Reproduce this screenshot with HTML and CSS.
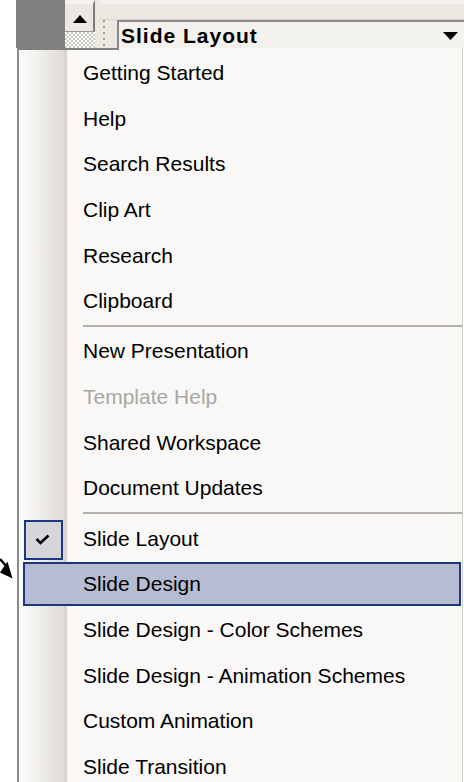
FILE: index.html
```html
<!DOCTYPE html>
<html lang="en">
<head>
<meta charset="utf-8">
<title>Task Pane Menu</title>
<link rel="stylesheet" href="styles.css">
</head>
<body>
<div class="screen">
  <header class="taskbar">
    <div class="gap"></div>
    <div class="dark"></div>
    <div class="scroll">
      <div class="scroll-up">
        <svg width="14" height="8" viewBox="0 0 14 8"><polygon points="7,0 14,8 0,8" fill="#000"/></svg>
      </div>
      <div class="dither"></div>
    </div>
    <div class="pane-bar">
      <div class="pane-top"></div>
      <div class="pane-row">
        <div class="grip-area"><span class="grip"></span></div>
        <div class="pane-title">
          <span class="title-text">Slide Layout</span>
          <svg class="drop" width="15" height="8" viewBox="0 0 15 8"><polygon points="0,0 15,0 7.5,8" fill="#000"/></svg>
        </div>
      </div>
    </div>
  </header>

  <div class="menu">
    <div class="menu-edge"><span class="edge-line"></span></div>
    <ul class="items">
      <li class="item"><span class="mark"></span><span class="label">Getting Started</span></li>
      <li class="item"><span class="mark"></span><span class="label">Help</span></li>
      <li class="item"><span class="mark"></span><span class="label">Search Results</span></li>
      <li class="item"><span class="mark"></span><span class="label">Clip Art</span></li>
      <li class="item"><span class="mark"></span><span class="label">Research</span></li>
      <li class="item"><span class="mark"></span><span class="label">Clipboard</span></li>
      <li class="sep"></li>
      <li class="item"><span class="mark"></span><span class="label">New Presentation</span></li>
      <li class="item disabled"><span class="mark"></span><span class="label">Template Help</span></li>
      <li class="item"><span class="mark"></span><span class="label">Shared Workspace</span></li>
      <li class="item"><span class="mark"></span><span class="label">Document Updates</span></li>
      <li class="sep"></li>
      <li class="item"><span class="mark checked"><svg width="15" height="11" viewBox="0 0 15 11"><path d="M1.5 5 L5.5 9 L13.5 1.5" fill="none" stroke="#000" stroke-width="2.6"/></svg></span><span class="label">Slide Layout</span></li>
      <li class="item hot"><span class="mark"></span><span class="label">Slide Design</span></li>
      <li class="item"><span class="mark"></span><span class="label">Slide Design - Color Schemes</span></li>
      <li class="item"><span class="mark"></span><span class="label">Slide Design - Animation Schemes</span></li>
      <li class="item"><span class="mark"></span><span class="label">Custom Animation</span></li>
      <li class="item"><span class="mark"></span><span class="label">Slide Transition</span></li>
    </ul>
  </div>

  <svg class="pointer" width="14" height="22" viewBox="0 0 14 22">
    <line x1="0" y1="1" x2="7" y2="9" stroke="#000" stroke-width="2.4"/>
    <polygon points="12.5,20.5 0,14.5 7.5,3.5" fill="#000"/>
  </svg>
</div>
</body>
</html>
```

FILE: styles.css
```css
html, body {
  margin: 0;
  padding: 0;
  background: #fff;
}

.screen {
  position: relative;
  width: 464px;
  height: 782px;
  overflow: hidden;
  font-family: "Liberation Sans", Arial, sans-serif;
  color: #000;
}

/* ---- task pane title strip ---- */
.taskbar {
  display: flex;
  height: 48px;
}

.gap {
  width: 16px;
  flex: none;
}

.dark {
  width: 49px;
  flex: none;
  background: #808080;
}

.scroll {
  width: 30px;
  flex: none;
  display: flex;
  flex-direction: column;
}

.scroll-up {
  height: 32px;
  box-sizing: border-box;
  display: flex;
  align-items: flex-start;
  justify-content: center;
  padding-top: 11px;
  padding-left: 1px;
  background: #ebe8e2;
  border-top: 4px solid #f4f2ee;
  border-right: 2px solid #7c7c7c;
  border-bottom: 1px solid #9a9a9a;
}

.dither {
  flex: 1;
  background: repeating-conic-gradient(#c8c6c0 0 25%, #fbfbfa 0 50%) 0 0 / 4px 4px;
}

.pane-bar {
  flex: 1;
  display: flex;
  flex-direction: column;
  background: #ebe8e1;
}

.pane-top {
  height: 20px;
  box-sizing: border-box;
  border-top: 4px solid #f3f1ed;
  border-bottom: 1px solid #d9d5cd;
  margin-left: 5px;
}

.pane-row {
  flex: 1;
  display: flex;
}

.grip-area {
  width: 22px;
  flex: none;
  display: flex;
  justify-content: center;
}

.grip {
  width: 2px;
  height: 26px;
  margin-left: -4px;
  background: repeating-linear-gradient(to bottom, #9c9a94 0 2px, transparent 2px 6px);
}

.pane-title {
  flex: 1;
  display: flex;
  align-items: center;
  justify-content: space-between;
  box-sizing: border-box;
  border-top: 2px solid #8a8a8a;
  border-left: 2px solid #8a8a8a;
  background: #f3f2ee;
  padding: 0 6px 0 2px;
}

.title-text {
  font-weight: bold;
  font-size: 21px;
  letter-spacing: 1px;
  line-height: 1;
  margin-top: 1px;
}

.drop {
  margin-top: 2px;
}

/* ---- drop-down menu ---- */
.menu {
  margin-left: 17px;
  width: 446px;
  box-sizing: border-box;
  border-left: 2px solid #8a8a8a;
  border-right: 1px solid #cfcdc8;
  background: linear-gradient(to right, #fdfcfb 0, #f1efeb 20px, #dfdbd4 44px, #d6d2cb 48px, #f9f8f7 48px);
  height: 734px;
}

.menu-edge {
  height: 2px;
  display: flex;
}

.edge-line {
  width: 100px;
  background: #808080;
}

.items {
  list-style: none;
  margin: 0;
  padding: 0;
}

.item {
  height: 45.7px;
  box-sizing: border-box;
  display: flex;
  align-items: center;
  padding-left: 5px;
  font-size: 21px;
  white-space: nowrap;
}

.mark {
  width: 39px;
  height: 40px;
  flex: none;
  margin-right: 20px;
  box-sizing: border-box;
  display: flex;
  align-items: center;
  justify-content: center;
}

.mark.checked {
  border: 2px solid #1c3680;
  background: #d5d6da;
  margin-top: 2px;
  padding-right: 2px;
}

.disabled {
  color: #a8a7a2;
}

.item.hot {
  margin: 1px 1px 1px 4px;
  height: 43.7px;
  padding-left: 0;
  border: 2px solid #1c3680;
  background: #b6bdd2;
}

.item.hot .mark {
  margin-right: 19px;
}

.sep {
  height: 4.4px;
  display: flex;
  flex-direction: column;
  justify-content: center;
  margin-left: 64px;
}

.sep::before {
  content: "";
  height: 2px;
  background: #b3b0a9;
}

/* annotation arrow at the left edge */
.pointer {
  position: absolute;
  left: 0;
  top: 558px;
}
```
